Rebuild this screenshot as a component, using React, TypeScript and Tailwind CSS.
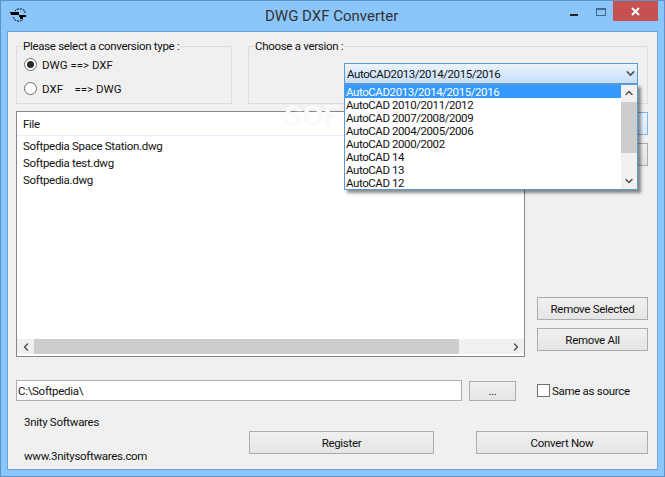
import { ChevronDown, ChevronLeft, ChevronRight, ChevronUp } from "lucide-react";

const versions = [
  "AutoCAD2013/2014/2015/2016",
  "AutoCAD 2010/2011/2012",
  "AutoCAD 2007/2008/2009",
  "AutoCAD 2004/2005/2006",
  "AutoCAD 2000/2002",
  "AutoCAD 14",
  "AutoCAD 13",
  "AutoCAD 12",
];

const files = ["Softpedia Space Station.dwg", "Softpedia test.dwg", "Softpedia.dwg"];

function AppIcon() {
  return (
    <svg width="18" height="15" viewBox="0 0 18 15" className="shrink-0">
      <path d="M5 3 L7 1 H12 L15 3 V5" fill="none" stroke="#000" strokeWidth="1" strokeDasharray="2 1" />
      <path d="M3 9 L5 12 L7 13 H11 L13 11" fill="none" stroke="#000" strokeWidth="1" strokeDasharray="2 1" />
      <path d="M0 4 H9 V7 H1 Z" fill="#000" />
      <path d="M9 7 H16 V9 H13 V11 H10 V9 H9 Z" fill="#000" />
    </svg>
  );
}

function Radio({ checked, children }: { checked?: boolean; children: React.ReactNode }) {
  return (
    <div className="flex h-[13px] items-center">
      <span className="flex size-[13px] items-center justify-center rounded-full border border-[#6d6d6d] bg-white">
        {checked && <span className="size-[7px] rounded-full bg-[#2a2a2a]" />}
      </span>
      <span className="ml-[5px] whitespace-pre tracking-normal">{children}</span>
    </div>
  );
}

function Button({ className, children }: { className: string; children?: React.ReactNode }) {
  return (
    <div
      className={`flex items-center justify-center border border-[#acacac] bg-gradient-to-b from-[#f0f0f0] to-[#e5e5e5] ${className}`}
    >
      {children}
    </div>
  );
}

export default function App() {
  return (
    <div
      className="flex h-[477px] w-[665px] flex-col overflow-hidden border border-[#5f93c4] bg-[#8ac5fb] text-[11.5px] leading-4 tracking-[-0.3px] text-[#111]"
      style={{ fontFamily: 'Roboto, "Noto Sans", sans-serif' }}
    >
      {/* title bar */}
      <div className="flex h-[30px] shrink-0 items-start">
        <div className="ml-[9px] mt-[7px]">
          <AppIcon />
        </div>
        <div className="ml-[237px] pt-[5px] text-[15px] leading-5 tracking-normal text-[#333]">DWG DXF Converter</div>
        <div className="ml-auto mt-[13px] mr-[18px] h-[2px] w-[8px] bg-[#222]" />
        <div className="mt-[7px] mr-[7px] h-[8px] w-[10px] border border-t-2 border-[#44698c]" />
        <div className="mr-[6px] flex h-[20px] w-[45px] items-center justify-center bg-[#c75050]">
          <svg width="9" height="9" viewBox="0 0 9 9">
            <path d="M1 1 L8 8 M8 1 L1 8" stroke="#fff" strokeWidth="2" />
          </svg>
        </div>
      </div>

      {/* client area */}
      <div className="mx-[6px] flex h-[439px] flex-col border border-[#6fa3d3] bg-[#f0f0f0] px-[8px]">
        <div className="mt-[6px] flex h-[66px] shrink-0 gap-[16px]">
          <fieldset className="h-[66px] w-[216px] border border-[#dcdcdc]">
            <legend className="ml-[5px] px-px">Please select a conversion type :</legend>
            <div className="ml-[7px] mt-[4px] flex flex-col gap-[11px]">
              <Radio checked>DWG ==&gt; DXF</Radio>
              <Radio>DXF    ==&gt; DWG</Radio>
            </div>
          </fieldset>
          <fieldset className="relative h-[66px] w-[400px] border border-[#dcdcdc]">
            <legend className="ml-[5px] px-px">Choose a version :</legend>
            <div className="ml-[95px] mt-[9px] flex h-[21px] w-[294px] items-center justify-between border border-[#5b9bd5] bg-gradient-to-b from-[#ecf4fc] to-[#c5dff8] pl-[2px] tracking-[-0.42px]">
              <span>AutoCAD2013/2014/2015/2016</span>
              <ChevronDown size={13} strokeWidth={3} className="text-[#555]" />
            </div>
            {/* open dropdown list */}
            <div className="absolute left-[95px] top-[30px] z-10 flex h-[106px] w-[294px] border border-[#5b9bd5] bg-white tracking-[-0.42px] shadow-[3px_3px_3px_rgba(0,0,0,0.45)]">
              <div className="flex-1 leading-[12px]">
                {versions.map((v, i) => (
                  <div key={v} className={`pl-[1px] pt-px ${i === 0 ? "bg-[#3399ff] text-white" : ""}`}>
                    {v}
                  </div>
                ))}
              </div>
              <div className="flex w-[16px] flex-col items-center justify-between bg-[#f0f0f0]">
                <ChevronUp size={12} strokeWidth={3} className="mt-[2px] text-[#555]" />
                <div className="absolute right-0 top-[17px] h-[51px] w-[16px] bg-[#cdcdcd]" />
                <ChevronDown size={12} strokeWidth={3} className="mb-[2px] text-[#555]" />
              </div>
            </div>
          </fieldset>
        </div>

        <div className="mt-[7px] flex h-[246px] shrink-0">
          <div className="relative flex w-[509px] flex-col border border-[#828790] bg-white">
            <div className="flex h-[24px] shrink-0 items-center border-b border-[#e5effa] pl-[6px] pt-px">File</div>
            <div className="flex-1 pl-[6px] pt-[2px] leading-[17px]">
              {files.map((f) => (
                <div key={f}>{f}</div>
              ))}
            </div>
            <div className="mb-[2px] flex h-[15px] shrink-0 items-center bg-[#f0f0f0]">
              <div className="flex w-[17px] justify-center">
                <ChevronLeft size={12} strokeWidth={3} className="text-[#555]" />
              </div>
              <div className="h-full w-[425px] bg-[#cdcdcd]" />
              <div className="flex-1" />
              <div className="flex w-[17px] justify-center">
                <ChevronRight size={12} strokeWidth={3} className="text-[#555]" />
              </div>
            </div>
            <div className="absolute left-[267px] top-[-14px] select-none text-[30px] font-bold leading-[36px] tracking-normal text-[#fafafa]">
              SOF
            </div>
          </div>
          <div className="ml-[12px] flex w-[111px] flex-col">
            <Button className="mt-px h-[23px] !border-[#7eb4ea] !from-[#ecf4fc] !to-[#dcecfc]" />
            <Button className="mt-[8px] h-[23px]" />
            <Button className="mt-auto h-[23px]">Remove Selected</Button>
            <Button className="mb-[6px] mt-[8px] h-[23px]">Remove All</Button>
          </div>
        </div>

        <div className="mt-[23px] flex h-[21px] shrink-0 items-center">
          <div className="flex h-[21px] w-[446px] items-center border border-[#abadb3] bg-white pl-px">C:\Softpedia\</div>
          <Button className="ml-[7px] h-[20px] w-[47px]">...</Button>
          <span className="ml-[21px] size-[13px] border border-[#707070] bg-white" />
          <span className="ml-[2px]">Same as source</span>
        </div>

        <div className="flex flex-1">
          <div className="ml-[8px] mt-[13px] w-[225px]">
            <div>3nity Softwares</div>
            <div className="mt-[18px]">www.3nitysoftwares.com</div>
          </div>
          <Button className="mt-[30px] h-[23px] w-[185px]">Register</Button>
          <Button className="ml-[42px] mt-[30px] h-[23px] w-[172px]">Convert Now</Button>
        </div>
      </div>
    </div>
  );
}
